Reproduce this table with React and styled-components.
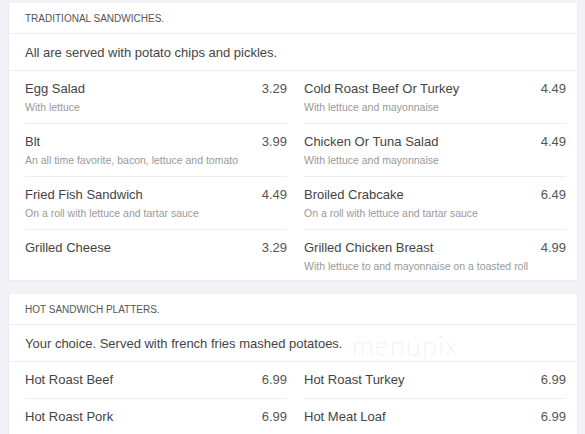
import React from "react";
import styled, { createGlobalStyle } from "styled-components";

const GlobalStyle = createGlobalStyle`
  html, body {
    margin: 0;
    padding: 0;
    background: #f1f1f6;
  }
  body {
    font-family: "Liberation Sans", Arial, sans-serif;
  }
`;

const Page = styled.div`
  display: flex;
  flex-direction: column;
  gap: 13px;
  padding: 3px 7px 0 8px;
  width: 570px;
`;

const Section = styled.section`
  position: relative;
  background: #fff;
  border: 1px solid #ececf0;
  border-top: none;
`;

const SectionTitle = styled.h3`
  margin: 0;
  height: 30px;
  display: flex;
  align-items: center;
  padding: 0 16px;
  font-size: 10px;
  font-weight: 400;
  color: #555;
  text-transform: uppercase;
  border-bottom: 1px solid #eeeeee;
`;

const SectionNote = styled.p`
  margin: 0;
  height: 36px;
  display: flex;
  align-items: center;
  padding: 0 16px;
  font-size: 13px;
  color: #444;
  border-bottom: 1px solid #eeeeee;
`;

const Grid = styled.div`
  display: grid;
  grid-template-columns: 262px 262px;
  column-gap: 17px;
  padding: 0 12px 0 16px;
`;

const Item = styled.div`
  display: flex;
  flex-direction: column;
  padding-top: 9px;
  padding-bottom: ${(p) => (p.$compact ? "11px" : p.$last ? "7px" : "9px")};
  border-bottom: ${(p) => (p.$last ? "none" : "1px solid #eeeeee")};
`;

const ItemHead = styled.div`
  display: flex;
  justify-content: space-between;
  align-items: center;
  height: 16px;
`;

const Name = styled.span`
  font-size: 13px;
  color: #444;
`;

const Price = styled.span`
  font-size: 13px;
  color: #555;
`;

const Desc = styled.span`
  margin-top: 4px;
  font-size: 10.5px;
  line-height: 14px;
  color: #999;
`;

const Watermark = styled.span`
  position: absolute;
  left: 343px;
  top: 35px;
  font-family: Lato, sans-serif;
  font-weight: 200;
  font-size: 27px;
  letter-spacing: 1.4px;
  color: #d8d8d8;
  pointer-events: none;
`;

const traditional = [
  { name: "Egg Salad", price: "3.29", desc: "With lettuce" },
  { name: "Cold Roast Beef Or Turkey", price: "4.49", desc: "With lettuce and mayonnaise" },
  { name: "Blt", price: "3.99", desc: "An all time favorite, bacon, lettuce and tomato" },
  { name: "Chicken Or Tuna Salad", price: "4.49", desc: "With lettuce and mayonnaise" },
  { name: "Fried Fish Sandwich", price: "4.49", desc: "On a roll with lettuce and tartar sauce" },
  { name: "Broiled Crabcake", price: "6.49", desc: "On a roll with lettuce and tartar sauce" },
  { name: "Grilled Cheese", price: "3.29" },
  {
    name: "Grilled Chicken Breast",
    price: "4.99",
    desc: "With lettuce to and mayonnaise on a toasted roll",
  },
];

const platters = [
  { name: "Hot Roast Beef", price: "6.99" },
  { name: "Hot Roast Turkey", price: "6.99" },
  { name: "Hot Roast Pork", price: "6.99" },
  { name: "Hot Meat Loaf", price: "6.99" },
];

const MenuGrid = ({ items, compact }) => (
  <Grid>
    {items.map((it, i) => (
      <Item key={it.name} $compact={compact} $last={i >= items.length - 2}>
        <ItemHead>
          <Name>{it.name}</Name>
          <Price>{it.price}</Price>
        </ItemHead>
        {it.desc && <Desc>{it.desc}</Desc>}
      </Item>
    ))}
  </Grid>
);

export default function App() {
  return (
    <>
      <GlobalStyle />
      <Page>
        <Section>
          <SectionTitle>Traditional Sandwiches.</SectionTitle>
          <SectionNote>All are served with potato chips and pickles.</SectionNote>
          <MenuGrid items={traditional} />
        </Section>
        <Section>
          <SectionTitle>Hot Sandwich Platters.</SectionTitle>
          <SectionNote>Your choice. Served with french fries mashed potatoes.</SectionNote>
          <Watermark>menupix</Watermark>
          <MenuGrid items={platters} compact />
        </Section>
      </Page>
    </>
  );
}
